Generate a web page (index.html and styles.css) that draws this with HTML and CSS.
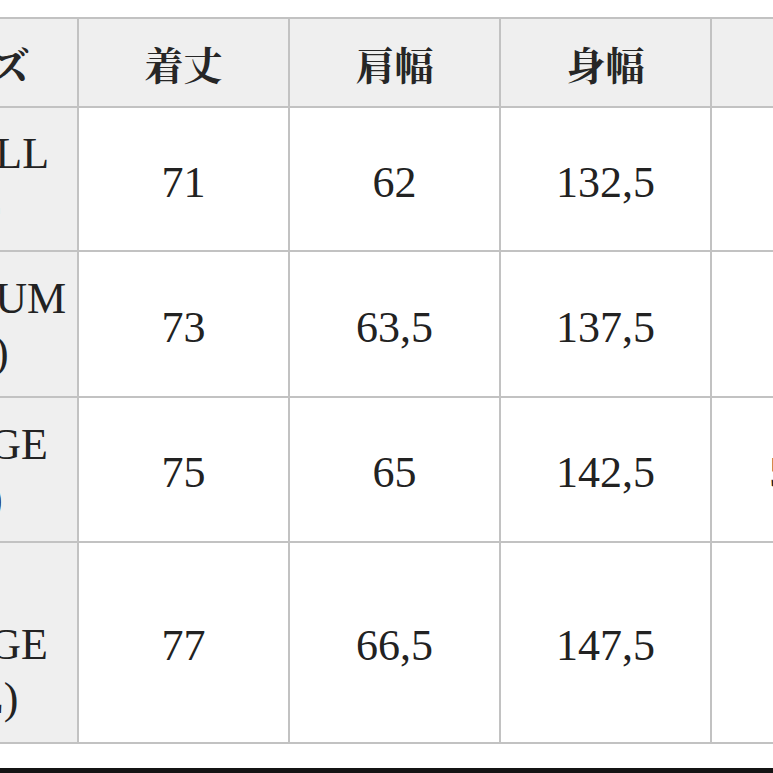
FILE: index.html
```html
<!DOCTYPE html>
<html lang="ja">
<head>
<meta charset="utf-8">
<title>サイズ表</title>
<link rel="stylesheet" href="styles.css">
</head>
<body>
<div class="viewport">
  <table class="size-table">
    <colgroup>
      <col class="col"><col class="col"><col class="col"><col class="col"><col class="col">
    </colgroup>
    <thead>
      <tr class="head-row">
        <th class="label">サイズ</th>
        <th>着丈</th>
        <th>肩幅</th>
        <th>身幅</th>
        <th class="last">袖丈</th>
      </tr>
    </thead>
    <tbody>
      <tr class="row-s">
        <th class="label">SMALL<br>(S)</th>
        <td>71</td><td>62</td><td>132,5</td><td class="last">50</td>
      </tr>
      <tr class="row-m">
        <th class="label">MEDIUM<br>(M)</th>
        <td>73</td><td>63,5</td><td>137,5</td><td class="last">51</td>
      </tr>
      <tr class="row-l">
        <th class="label">LARGE<br>(L)</th>
        <td>75</td><td>65</td><td>142,5</td><td class="last wide">52,5</td>
      </tr>
      <tr class="row-xl">
        <th class="label">X<br>LARGE<br>(XL)</th>
        <td>77</td><td>66,5</td><td>147,5</td><td class="last">54</td>
      </tr>
    </tbody>
  </table>
</div>
<div class="bottom-bar"></div>
</body>
</html>
```
FILE: styles.css
```css
html, body {
  margin: 0;
  padding: 0;
  background: #ffffff;
}

body {
  width: 773px;
  height: 773px;
  overflow: hidden;
  display: flex;
  flex-direction: column;
}

.viewport {
  width: 773px;
  overflow: hidden;
  padding-top: 17px;
  flex: 1 1 auto;
}

.size-table {
  margin-left: -134px;
  width: 1055px;
  table-layout: fixed;
  border-collapse: collapse;
  font-family: "Liberation Serif", "Times New Roman", serif;
  color: #222222;
}

.size-table .col {
  width: 211px;
}

.size-table th,
.size-table td {
  border: 2px solid #c2c2c2;
  text-align: center;
  vertical-align: middle;
  padding: 0;
  white-space: nowrap;
}

.head-row {
  height: 89px;
}

.head-row th {
  background: #efefef;
  font-family: "Noto Serif CJK JP", "Noto Sans CJK JP", sans-serif;
  font-weight: 700;
  font-size: 39px;
  line-height: 1;
  color: #262626;
  padding-top: 2px;
}

.size-table tbody td {
  font-size: 44px;
  line-height: 54px;
  padding-top: 7px;
  background: #ffffff;
}

.size-table tbody td.last {
  text-align: left;
  padding-left: 82px;
}

.size-table tbody td.last.wide {
  padding-left: 57px;
}

.size-table tbody th.label {
  background: #efefef;
  font-weight: 400;
  font-size: 44px;
  line-height: 54px;
  padding-top: 4px;
  padding-left: 4px;
  white-space: normal;
}

.row-s { height: 144px; }
.row-m { height: 146px; }
.row-l { height: 145px; }
.row-xl { height: 201px; }

.bottom-bar {
  height: 5px;
  background: #141414;
  flex: 0 0 auto;
}
```
